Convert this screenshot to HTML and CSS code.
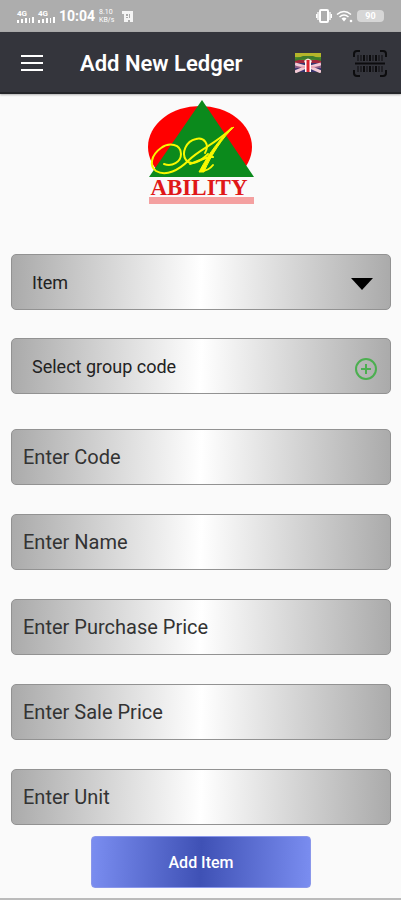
FILE: index.html
```html
<!DOCTYPE html>
<html lang="en">
<head>
    <meta charset="UTF-8">
    <meta name="viewport" content="width=device-width, initial-scale=1.0">
    <title>Add New Ledger</title>
    <link rel="stylesheet" href="styles.css">
</head>
<body>
    <div class="status-bar">
        <div class="status-left">
            <span class="signal">
                <span class="signal-label">4G</span>
                <svg width="17" height="6" viewBox="0 0 17 6" fill="#fff"><path d="M0 3h2v3H0zM4 2h2v4H4zM8 1h2v5H8zM12 1h1v5h-1zM15 0h2v6h-2z"/></svg>
            </span>
            <span class="signal">
                <span class="signal-label">4G</span>
                <svg width="17" height="6" viewBox="0 0 17 6" fill="#fff"><path d="M0 3h2v3H0zM4 2h2v4H4zM8 1h2v5H8zM12 1h1v5h-1zM15 0h2v6h-2z"/></svg>
            </span>
            <span class="clock">10:04</span>
            <span class="speed"><span>8.10</span><span>KB/s</span></span>
            <svg width="11" height="11" viewBox="0 0 11 11"><path d="M0 0h11v11H8V9H6v2H2V3H0z" fill="#f4f4f4"/><path d="M4 3h2v2H4zM7 3h1v4H7zM4 6h2v1H4z" fill="#aaa"/></svg>
        </div>
        <div class="status-right">
            <svg width="16" height="14" viewBox="0 0 16 14"><rect x="4" y="1" width="8" height="12" rx="1" fill="none" stroke="#fff" stroke-width="2"/><path d="M2 3v8M14 3v8M.5 5v4M15.500 5v4" stroke="#fff" stroke-width="1.300"/></svg>
            <svg width="17" height="13" viewBox="0 0 17 13" fill="none" stroke="#fff" stroke-width="1.500"><path d="M1 4.500Q8 -1.500 15 4.500M3.500 7Q8 3 12.500 7"/><path d="M5.500 8.500Q8 6.500 10.500 8.500L8 11.500z" fill="#fff" stroke="none"/><circle cx="15" cy="11" r="1.300" fill="#fff" stroke="none"/></svg>
            <span class="battery">90</span>
        </div>
    </div>

    <header class="header">
        <button class="icon-btn" type="button" aria-label="Menu">
            <svg width="22" height="16" viewBox="0 0 22 16" stroke="#fff" stroke-width="2"><path d="M0 1h22M0 8h22M0 15h22"/></svg>
        </button>
        <h1>Add New Ledger</h1>
        <button class="icon-btn" type="button" aria-label="Language">
            <svg width="26" height="20" viewBox="0 0 26 20">
                <path d="M0 0h26v4H0z" fill="#b5b52a"/>
                <path d="M0 4h26v4H0z" fill="#4c8c2c"/>
                <path d="M0 7h26v4H0z" fill="#a3283c"/>
                <path d="M0 10h26v9H0z" fill="#39356f"/>
                <path d="M0 11l11 3L0 19M26 11l-11 3 11 5" fill="none" stroke="#f3c9d4" stroke-width="3"/>
                <path d="M0 14h26" stroke="#e0889c" stroke-width="1"/>
                <path d="M0 6l8-3h10l8 3v2l-8-2H8L0 8z" fill="#3f7b2c"/>
                <path d="M9 8q4-5 8 0l-1 2h-6z" fill="#f2e3d8"/>
                <path d="M13 8v11" stroke="#fff" stroke-width="6"/>
                <path d="M13 7v12" stroke="#dc2430" stroke-width="3"/>
            </svg>
        </button>
        <button class="icon-btn" type="button" aria-label="Scan barcode">
            <svg width="34" height="27" viewBox="0 0 34 27" fill="none" stroke="#0c0c0e">
                <path d="M1 7V4q0-3 3-3h3M27 1h3q3 0 3 3v3M33 20v3q0 3-3 3h-3M7 26H4q-3 0-3-3v-3" stroke-width="2"/>
                <path d="M2 13.500h30" stroke-width="2"/>
                <path d="M5 5v6M8 5v6M14 5v6M20 5v6M26 5v6M29 5v6M5 16v6M8 16v6M14 16v6M20 16v6M26 16v6M29 16v6" stroke-width="1"/>
                <path d="M11 5v6M17 5v6M23 5v6M11 16v6M17 16v6M23 16v6" stroke-width="2"/>
            </svg>
        </button>
    </header>

    <main class="content">
        <svg class="logo" width="106" height="108" viewBox="0 0 106 108" role="img" aria-label="Ability">
            <ellipse cx="52" cy="49" rx="52" ry="41" fill="#f00"/>
            <path d="M-2 78h110v12H-2z" fill="#fafafa"/>
            <path d="M54 2L106 79H1z" fill="#0b8a1c"/>
            <g fill="none" stroke="#f8f800" stroke-width="2" stroke-linecap="round">
                <path d="M16 66c8 3 17-2 17-10 0-10-12-12-20-6C3 57 1 68 8 73c10 6 23-1 33-11 11-11 25-15 43-32"/>
                <path d="M57 55c5-9-1-16-9-14-10 2-15 14-10 21 5 6 14 2 22-6"/>
                <path d="M42 66c9-3 17-8 23-7"/>
                <path d="M53 73c4 0 9-2 12-6"/>
            </g>
            <path d="M86 29c-12 8-25 26-35 45h5c7-17 19-35 30-45z" fill="#f8f800" stroke="#f8f800"/>
            <text class="logo-text" x="51" y="97" text-anchor="middle">ABILITY</text>
            <path d="M1 99h105v7H1z" fill="#f4a0a0"/>
        </svg>

        <form class="ledger-form">
            <div class="field">
                <select class="control" aria-label="Ledger type">
                    <option>Item</option>
                </select>
                <svg class="field-icon arrow" width="22" height="12" viewBox="0 0 22 12"><path d="M0 0h22L11 12z"/></svg>
            </div>
            <div class="field group-field">
                <select class="control" aria-label="Group code">
                    <option>Select group code</option>
                </select>
                <button class="field-icon add-group" type="button" aria-label="Add group code">
                    <svg width="24" height="24" viewBox="0 0 24 24" fill="none" stroke="#4caf50" stroke-width="2"><circle cx="12" cy="12" r="10"/><path d="M12 7v10M7 12h10"/></svg>
                </button>
            </div>
            <input class="control" type="text" placeholder="Enter Code" aria-label="Code">
            <input class="control" type="text" placeholder="Enter Name" aria-label="Name">
            <input class="control" type="text" placeholder="Enter Purchase Price" aria-label="Purchase price">
            <input class="control" type="text" placeholder="Enter Sale Price" aria-label="Sale price">
            <input class="control" type="text" placeholder="Enter Unit" aria-label="Unit">
            <button class="btn-add" type="submit">Add Item</button>
        </form>
    </main>
</body>
</html>
```
FILE: styles.css
```css
* {
    box-sizing: border-box;
}

body {
    margin: 0;
    min-height: 100vh;
    background-color: #fafafa;
    border-bottom: 2px solid #bbb;
    font-family: Roboto, "Noto Sans", sans-serif;
    color: #222;
}

button {
    border: 0;
    padding: 0;
    background: none;
    font-family: inherit;
    cursor: pointer;
}

svg {
    display: block;
}

.status-bar {
    display: flex;
    justify-content: space-between;
    align-items: center;
    height: 32px;
    padding: 0 17px;
    background-color: #adadad;
    color: #fff;
}

.status-left, .status-right {
    display: flex;
    align-items: center;
    gap: 4px;
}

.signal-label {
    display: block;
    font-size: 8px;
    line-height: 7px;
    font-weight: bold;
}

.clock {
    font-size: 14px;
    font-weight: bold;
}

.speed {
    display: flex;
    flex-direction: column;
    margin-right: 4px;
    font-size: 7px;
    line-height: 8px;
}

.battery {
    width: 27px;
    border-radius: 4px;
    background-color: #d6d6d6;
    font-size: 9px;
    line-height: 12px;
    font-weight: bold;
    text-align: center;
}

.header {
    display: flex;
    align-items: center;
    height: 62px;
    padding: 2px 14px 0 21px;
    background-color: #34353c;
    border-bottom: 2px solid #242529;
    box-shadow: 0 1px 2px rgba(0,0,0,0.3);
}

.header h1 {
    flex: 1;
    margin: 2px 0 0 37px;
    color: #fff;
    font-size: 22px;
    line-height: 28px;
    font-weight: 600;
}

.header .icon-btn:last-child {
    margin-left: 32px;
}

.content {
    padding: 4px 10px 10px 11px;
}

.logo {
    margin: 0 auto 48px;
}

.logo-text {
    font-family: "Liberation Serif", serif;
    font-size: 23px;
    font-weight: bold;
    fill: #e01818;
}

.ledger-form {
    display: flex;
    flex-direction: column;
    gap: 29px;
}

.field {
    position: relative;
}

.group-field {
    margin: -1px 0 6px;
}

.control {
    display: block;
    appearance: none;
    width: 100%;
    height: 56px;
    padding: 0 11px;
    border: 1px solid #929292;
    border-radius: 5px;
    background: linear-gradient(92deg, #aaa, #fff 50%, #aaa);
    color: #222;
    font-family: inherit;
    font-size: 20px;
}

.control::placeholder {
    color: #333;
    opacity: 1;
}

select.control {
    padding: 0 20px;
    font-size: 18px;
}

.field-icon {
    position: absolute;
    right: 13px;
    top: 19px;
}

.arrow {
    right: 18px;
    top: 24px;
    pointer-events: none;
}

.btn-add {
    align-self: center;
    width: 58%;
    height: 52px;
    margin-top: -18px;
    border: 1px solid #8a97ea;
    border-radius: 4px;
    background: linear-gradient(92deg, #7a8df0, #3f51b5 50%, #7a8df0);
    color: #fff;
    font-size: 16px;
    font-weight: 500;
}
```
